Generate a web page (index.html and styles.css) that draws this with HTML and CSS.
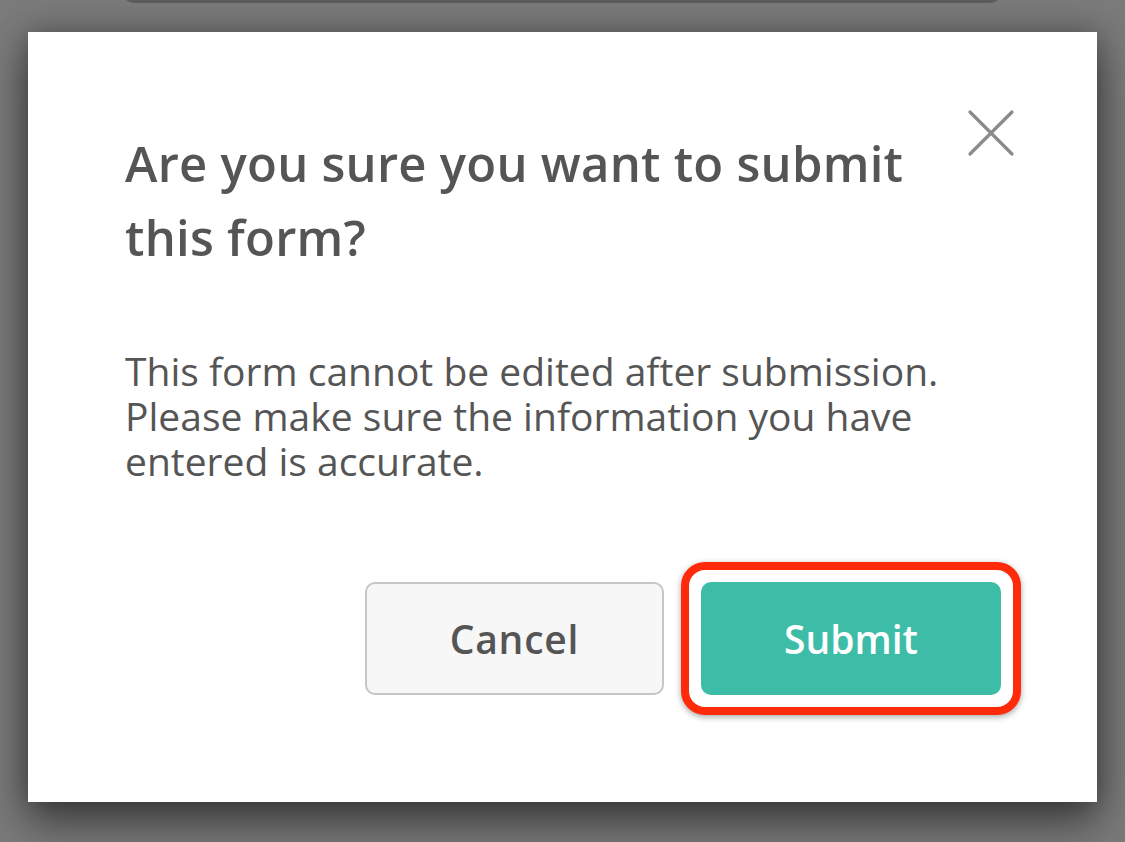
FILE: index.html
```html
<!DOCTYPE html>
<html>
<head>
<meta charset="utf-8">
<link rel="stylesheet" href="styles.css">
</head>
<body>
<div class="bg-field"></div>
<div class="modal">
  <button class="close" aria-label="Close">
    <svg width="50" height="50" viewBox="0 0 50 50"><path d="M3 3 L45 45 M45 3 L3 45" stroke="#8a8a8a" stroke-width="3.2" fill="none" stroke-linecap="round"/></svg>
  </button>
  <h1 class="title">Are you sure you want to submit this form?</h1>
  <p class="text">This form cannot be edited after submission. Please make sure the information you have entered is accurate.</p>
  <div class="actions">
    <button class="btn btn-cancel">Cancel</button>
    <div class="highlight">
      <button class="btn btn-submit">Submit</button>
    </div>
  </div>
</div>
</body>
</html>
```

FILE: styles.css
```css
html, body {
  margin: 0;
  padding: 0;
  height: 100%;
  overflow: hidden;
}
body {
  background: #7a7a7a;
  font-family: "Open Sans", sans-serif;
}
.bg-field {
  margin: -20px 0 0 122px;
  width: 874px;
  height: 20px;
  border: 3px solid #5c5c5c;
  border-top: none;
  border-radius: 0 0 12px 12px;
  background: #7e7e7e;
}
.modal {
  position: relative;
  margin: 29px 0 0 28px;
  width: 1069px;
  height: 770px;
  box-sizing: border-box;
  background: #fff;
  padding: 132px 76px 0 97px;
  box-shadow: 0 22px 40px rgba(0,0,0,0.45), 0 0 28px rgba(0,0,0,0.3);
}
.close {
  position: absolute;
  top: 77px;
  left: 939px;
  width: 50px;
  height: 50px;
  padding: 0;
  border: none;
  background: none;
}
.close svg { display: block; }
.title {
  margin: -38px 0 0 0;
  width: 830px;
  font-size: 49px;
  line-height: 74px;
  font-weight: 600;
  color: #555;
  letter-spacing: 0.25px;
}
.text {
  margin: 74px 0 0 0;
  width: 850px;
  font-size: 39px;
  line-height: 45px;
  font-weight: 400;
  color: #555;
}
.actions {
  margin-top: 79px;
  display: flex;
  justify-content: flex-end;
  align-items: center;
  gap: 17px;
}
.btn {
  font-family: "Open Sans", sans-serif;
  font-size: 39px;
  font-weight: 600;
  width: 300px;
  height: 113px;
  border-radius: 10px;
  box-sizing: border-box;
}
.btn-cancel {
  width: 299px;
  background: #f7f7f7;
  border: 2px solid #c6c6c6;
  color: #555;
  letter-spacing: 0.8px;
}
.highlight {
  padding: 12px;
  border: 8px solid #ff2a0a;
  border-radius: 24px;
  box-shadow: 0 2px 6px rgba(0,0,0,0.35);
  background: #fff;
}
.btn-submit {
  display: block;
  background: #3dbca8;
  border: none;
  color: #fff;
}
```
